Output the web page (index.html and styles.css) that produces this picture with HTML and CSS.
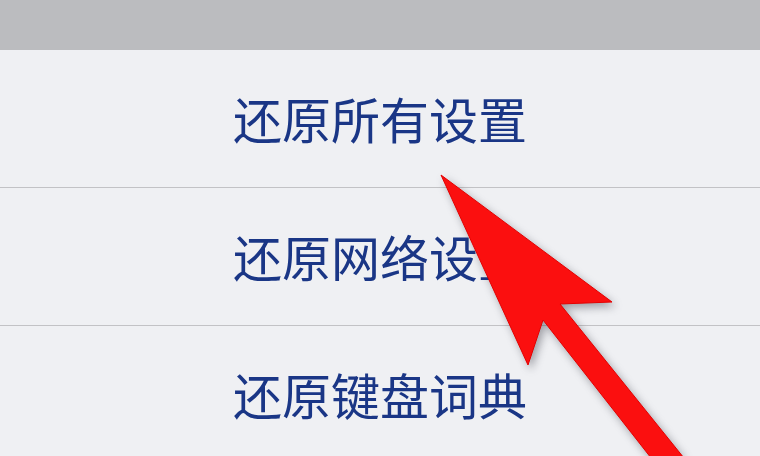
FILE: index.html
```html
<!DOCTYPE html>
<html lang="zh-CN">
<head>
<meta charset="utf-8">
<link rel="stylesheet" href="styles.css">
</head>
<body>
<div class="screen">
  <div class="topbar"></div>
  <div class="list">
    <div class="row"><span class="label">还原所有设置</span></div>
    <div class="row"><span class="label">还原网络设置</span></div>
    <div class="row"><span class="label">还原键盘词典</span></div>
  </div>
  <svg class="arrow" width="760" height="456" viewBox="0 0 760 456" xmlns="http://www.w3.org/2000/svg">
    <polygon points="441,175 612,302 560,304 688,463 655,463 543,320 528,365" fill="#fb0f0f" stroke="#e40000" stroke-width="1"/>
  </svg>
</div>
</body>
</html>
```
FILE: styles.css
```css
html, body {
  margin: 0;
  padding: 0;
  background: #eff0f3;
}
.screen {
  position: relative;
  width: 760px;
  height: 456px;
  overflow: hidden;
  background: #eff0f3;
  font-family: "Noto Sans CJK SC", "Noto Sans", sans-serif;
}
.topbar {
  height: 50px;
  background: #bbbcbf;
}
.list {
  display: flex;
  flex-direction: column;
}
.row {
  height: 137px;
  border-bottom: 1px solid #c2c2c5;
  display: flex;
  align-items: center;
  padding-left: 233px;
}
.label {
  font-size: 49px;
  line-height: 1;
  color: #1a3686;
  letter-spacing: 0;
  position: relative;
  top: -1px;
}
.arrow {
  position: absolute;
  left: 0;
  top: 0;
  filter: drop-shadow(3px 4px 4px rgba(60, 60, 70, 0.45));
}
```
